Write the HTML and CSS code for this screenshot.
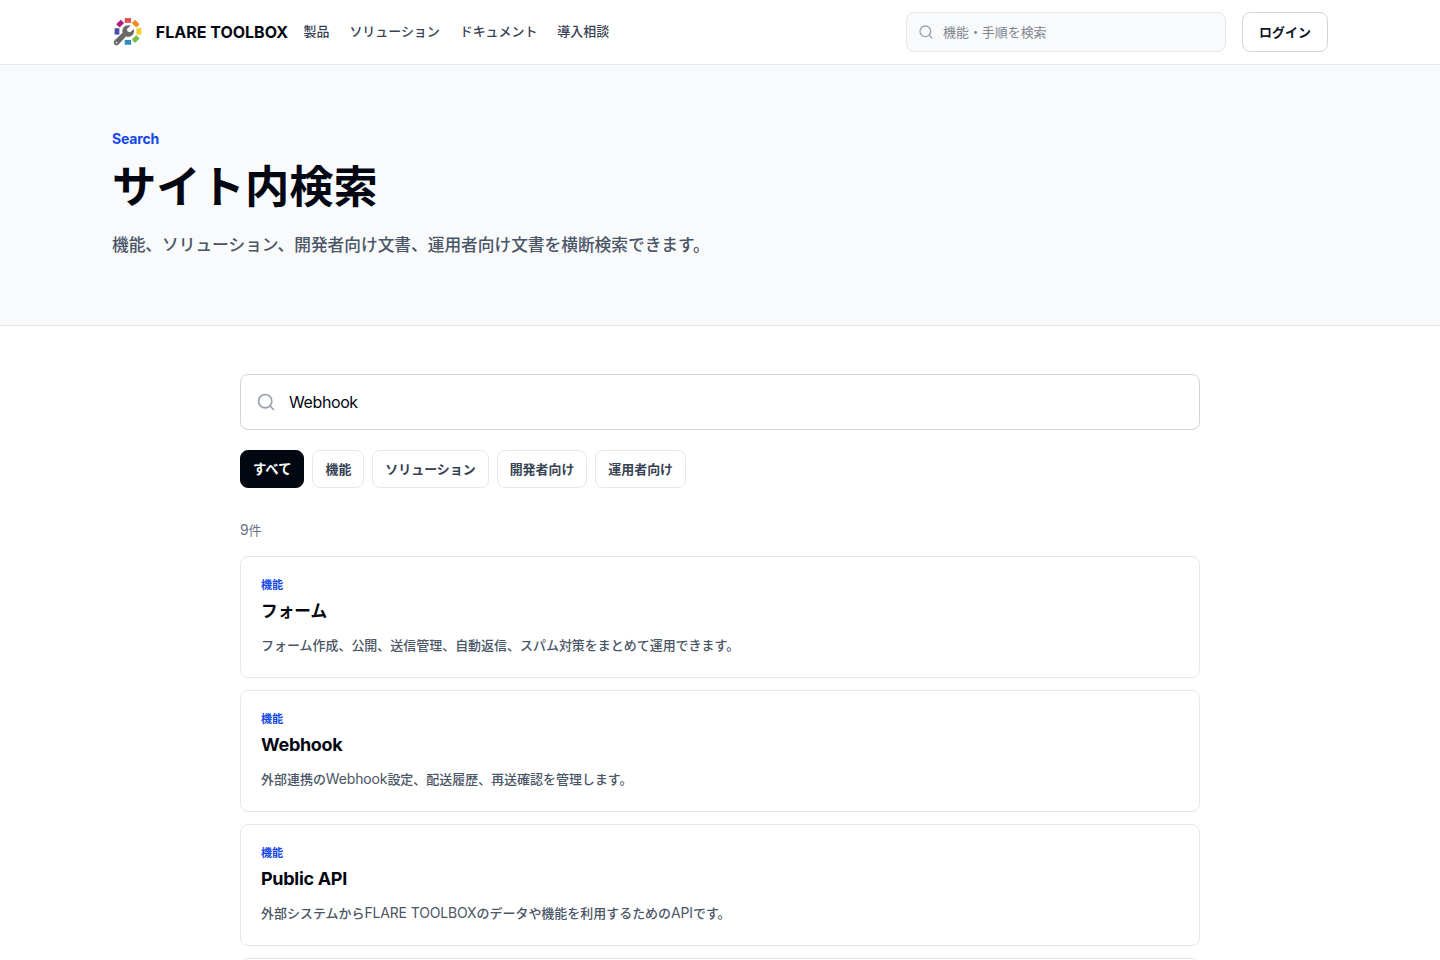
FILE: index.html
```html
<!DOCTYPE html>
<html lang="ja">

<head>
    <meta charset="utf-8">
    <title>サイト内検索 | FLARE TOOLBOX</title>
    <link rel="stylesheet" href="styles.css">
</head>

<body>

    <header class="site-header">
        <div class="header-inner">
            <a class="brand" href="#">
                <svg class="logo" viewBox="0 0 32 32">
                    <rect x="12.8" y="2" width="6.4" height="4.8" fill="#e0504a" />
                    <rect x="12.8" y="2" width="6.4" height="4.8" fill="#f58a1f" transform="rotate(45 16 15.4)" />
                    <rect x="12.8" y="2" width="6.4" height="4.8" fill="#f5cf22" transform="rotate(90 16 15.4)" />
                    <rect x="12.8" y="2" width="6.4" height="4.8" fill="#76bd43" transform="rotate(135 16 15.4)" />
                    <rect x="12.8" y="2" width="6.4" height="4.8" fill="#2b8fbd" transform="rotate(180 16 15.4)" />
                    <rect x="12.8" y="2" width="6.4" height="4.8" fill="#4a4fa5" transform="rotate(270 16 15.4)" />
                    <rect x="12.8" y="2" width="6.4" height="4.8" fill="#b0177f" transform="rotate(315 16 15.4)" />
                    <path d="M18.6 9.6 C14 8.2 9.4 11.6 10.6 16.8 L2.7 24.3 C1.2 26 1.8 28.2 3 29 C4.4 29.8 5.9 29.5 6.8 28.4 L14 20.5 C19 22.1 23.4 17.9 21.8 13 L18.4 16.2 L15.6 15.5 L15 12.9 Z" fill="#686868" />
                    <circle cx="4.6" cy="26.7" r="0.8" fill="#fff" />
                </svg>
                <span class="brand-name">FLARE TOOLBOX</span>
            </a>
            <nav class="site-nav">
                <a href="#">製品</a>
                <a href="#">ソリューション</a>
                <a href="#">ドキュメント</a>
                <a href="#">導入相談</a>
            </nav>
            <label class="header-search">
                <svg class="search-icon" viewBox="0 0 24 24">
                    <circle cx="11" cy="11" r="8" />
                    <path d="m21 21-4.3-4.3" />
                </svg>
                <input type="search" placeholder="機能・手順を検索">
            </label>
            <a class="login" href="#">ログイン</a>
        </div>
    </header>

    <section class="hero">
        <div class="hero-inner">
            <p class="eyebrow">Search</p>
            <h1>サイト内検索</h1>
            <p class="lead">機能、ソリューション、開発者向け文書、運用者向け文書を横断検索できます。</p>
        </div>
    </section>

    <main class="results">
        <label class="search-box">
            <svg class="search-icon" viewBox="0 0 24 24">
                <circle cx="11" cy="11" r="8" />
                <path d="m21 21-4.3-4.3" />
            </svg>
            <input type="text" value="Webhook">
        </label>

        <div class="filters">
            <button class="active">すべて</button>
            <button>機能</button>
            <button>ソリューション</button>
            <button>開発者向け</button>
            <button>運用者向け</button>
        </div>

        <p class="count"><span class="latin">9</span>件</p>

        <div class="result-list">
            <a class="card" href="#">
                <p class="tag">機能</p>
                <h2>フォーム</h2>
                <p class="desc">フォーム作成、公開、送信管理、自動返信、スパム対策をまとめて運用できます。</p>
            </a>
            <a class="card" href="#">
                <p class="tag">機能</p>
                <h2><span class="latin">Webhook</span></h2>
                <p class="desc">外部連携の<span class="latin">Webhook</span>設定、配送履歴、再送確認を管理します。</p>
            </a>
            <a class="card" href="#">
                <p class="tag">機能</p>
                <h2><span class="latin">Public API</span></h2>
                <p class="desc">外部システムから<span class="latin">FLARE TOOLBOX</span>のデータや機能を利用するための<span class="latin">API</span>です。</p>
            </a>
            <a class="card" href="#"></a>
        </div>
    </main>

</body>

</html>
```
FILE: styles.css
```css
* {
    box-sizing: border-box;
}

html {
    overflow: hidden;
}

body {
    margin: 0;
    height: 960px;
    overflow: hidden;
    background: #fff;
    color: #030712;
    font-family: Inter, "Noto Sans CJK JP", sans-serif;
}

h1, h2, p {
    margin: 0;
}

a {
    color: inherit;
    text-decoration: none;
}

input, button {
    font-family: inherit;
}

/* Header */
.site-header {
    height: 65px;
    border-bottom: 1px solid #e5e7eb;
}

.header-inner {
    display: flex;
    align-items: center;
    width: 1216px;
    height: 64px;
    margin: 0 auto;
}

.brand {
    display: flex;
    align-items: center;
    gap: 12px;
    width: 176px;
    margin-right: 15.5px;
}

.logo {
    width: 32px;
    height: 32px;
}

.brand-name {
    font-size: 16px;
    font-weight: 700;
    white-space: nowrap;
}

.site-nav {
    display: flex;
    gap: 20px;
    padding-bottom: 2px;
    color: #364153;
    font-size: 12.95px;
    font-weight: 500;
    line-height: 20px;
}

.search-icon {
    flex: none;
    fill: none;
    stroke: #99a1af;
    stroke-width: 2;
    stroke-linecap: round;
    stroke-linejoin: round;
}

.header-search {
    display: flex;
    align-items: center;
    gap: 9px;
    width: 320px;
    height: 40px;
    margin-left: auto;
    padding: 0 11px;
    border: 1px solid #e5e7eb;
    border-radius: 8px;
    background: #f9fafb;
}

.header-search .search-icon {
    width: 16px;
    height: 16px;
}

.header-search input {
    flex: 1;
    padding: 0;
    border: 0;
    outline: 0;
    background: none;
    font-size: 12.95px;
}

.header-search input::placeholder {
    color: #7f858f;
}

.login {
    width: 86px;
    height: 40px;
    margin-left: 16px;
    border: 1px solid #d1d5dc;
    border-radius: 8px;
    color: #101828;
    font-size: 12.95px;
    font-weight: 700;
    line-height: 38px;
    text-align: center;
}

/* Hero */
.hero {
    padding: 64px 0;
    border-bottom: 1px solid #e5e7eb;
    background: #f9fafc;
}

.hero-inner {
    width: 1216px;
    margin: 0 auto;
}

.eyebrow {
    color: #1447e6;
    font-size: 14px;
    font-weight: 700;
    letter-spacing: -0.15px;
    line-height: 20px;
}

.hero h1 {
    margin-top: 13px;
    font-size: 44.3px;
    font-weight: 700;
    line-height: 50px;
}

.lead {
    margin-top: 17px;
    color: #4a5565;
    font-size: 16.7px;
    font-weight: 500;
    line-height: 32px;
}

/* Results */
.results {
    width: 960px;
    margin: 0 auto;
    padding-top: 48px;
}

.search-box {
    display: flex;
    align-items: center;
    gap: 13px;
    height: 56px;
    padding: 0 15px;
    border: 1px solid #d1d5dc;
    border-radius: 8px;
}

.search-box .search-icon {
    width: 20px;
    height: 20px;
}

.search-box input {
    flex: 1;
    padding: 0;
    border: 0;
    outline: 0;
    color: #030712;
    font-size: 16px;
    letter-spacing: -0.4px;
}

.filters {
    display: flex;
    gap: 8px;
    margin-top: 20px;
}

.filters button {
    height: 38px;
    padding: 0 12px 2px;
    border: 1px solid #e5e7eb;
    border-radius: 8px;
    background: #fff;
    color: #364153;
    font-size: 12.95px;
    font-weight: 600;
}

.filters .active {
    padding: 0 12px 2px;
    border-color: #030712;
    background: #030712;
    color: #fff;
    font-size: 13.3px;
}

.count {
    margin-top: 32px;
    color: #6a7282;
    font-size: 12.95px;
    line-height: 20px;
}

.result-list {
    display: flex;
    flex-direction: column;
    gap: 12px;
    margin-top: 16px;
}

.card {
    height: 122px;
    padding: 20px;
    border: 1px solid #e5e7eb;
    border-radius: 8px;
}

.tag {
    color: #1447e6;
    font-size: 11.1px;
    font-weight: 600;
    line-height: 16px;
}

.card h2 {
    margin-top: 4px;
    font-size: 16.65px;
    font-weight: 700;
    line-height: 28px;
}

.card h2 .latin {
    font-size: 18px;
    letter-spacing: -0.3px;
}

.desc {
    margin-top: 8px;
    color: #4a5565;
    font-size: 12.97px;
    font-weight: 500;
    line-height: 24px;
}

/* latin glyphs run a little larger than the kana around them */
.count .latin,
.desc .latin {
    font-size: 14px;
    font-weight: 400;
    letter-spacing: -0.15px;
}
```
